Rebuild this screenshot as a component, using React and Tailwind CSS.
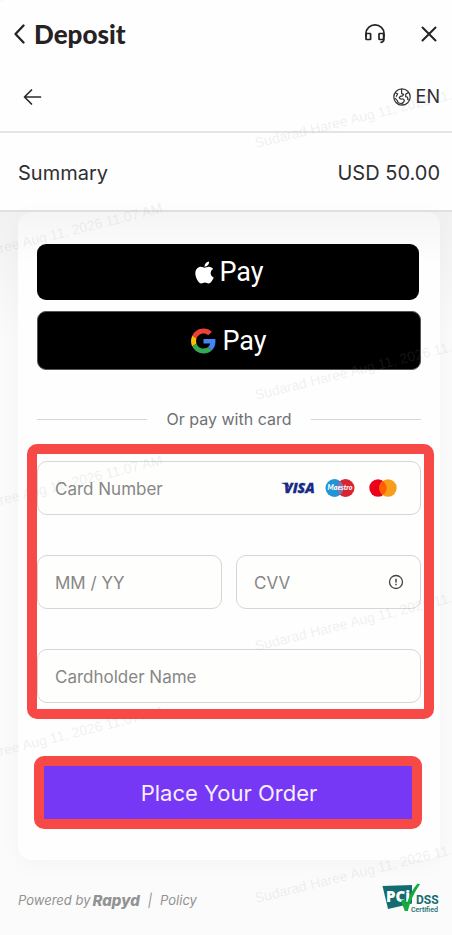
import { FaApple } from "react-icons/fa"

const watermarks = [
  { left: -71, top: 6 },
  { left: 257, top: 135 },
  { left: -71, top: 258 },
  { left: 257, top: 387 },
  { left: -71, top: 510 },
  { left: 257, top: 638 },
  { left: -71, top: 761 },
  { left: 257, top: 890 },
]

const HeadsetIcon = () => (
  <svg width="22" height="22" viewBox="0 0 22 22" fill="none" stroke="#262223" strokeWidth="1.7">
    <path d="M2 14V10.500a9 8.600 0 0 1 18 0v4" />
    <rect x="2" y="10.500" width="4.600" height="6" rx="0.6" />
    <rect x="15" y="10.500" width="4.600" height="6" rx="0.6" />
    <path d="M19.800 14.500v2.700q-.4 2-3.400 2.300" />
  </svg>
)

const GlobeIcon = () => (
  <svg width="18" height="18" viewBox="0 0 18 18" fill="none" stroke="#333" strokeWidth="1.2" strokeLinejoin="round">
    <circle cx="9" cy="9" r="8.2" />
    <path d="M8.600 1v4.600l2 .8-.8 1.400-2.600.6-1 1.400 1.400 1.200 3 .2.800 1.600-1.400 1.800-1.600 1.200-3.200-1-1-2.400-2.600-2.600M2.400 5l2.200.8-1.400 3M15.400 4.600l-2.600 1.400-.2 2.600 2 .6.200 2.400 1 .6M9.800 15.600l.4 1.400" />
  </svg>
)

const GoogleLogo = () => (
  <svg width="25" height="26" viewBox="0 0 48 48">
    <path fill="#ea4335" d="M24 9.500c3.540 0 6.710 1.220 9.210 3.600l6.850-6.850C35.900 2.380 30.470 0 24 0 14.620 0 6.510 5.380 2.560 13.220l7.980 6.190C12.430 13.720 17.740 9.500 24 9.500z" />
    <path fill="#4285f4" d="M46.980 24.550c0-1.570-.15-3.090-.38-4.550H24v9.020h12.940c-.58 2.960-2.260 5.480-4.780 7.180l7.730 6c4.510-4.180 7.090-10.360 7.090-17.650z" />
    <path fill="#fbbc05" d="M10.530 28.590c-.48-1.450-.76-2.990-.76-4.590s.27-3.140.76-4.590l-7.980-6.190C.92 16.460 0 20.120 0 24c0 3.880.92 7.540 2.560 10.780l7.970-6.190z" />
    <path fill="#34a853" d="M24 48c6.480 0 11.930-2.130 15.890-5.810l-7.730-6c-2.150 1.450-4.920 2.300-8.160 2.300-6.260 0-11.570-4.220-13.470-9.910l-7.980 6.190C6.510 42.620 14.620 48 24 48z" />
  </svg>
)

const VisaLogo = () => (
  <svg width="36" height="20" viewBox="0 0 36 20" role="img" aria-label="Visa">
    <path d="M0.500 4.700h6.500l1.400 5.400Q5.400 6.300 0.500 5.300z" fill="#1a2d8a" />
    <text x="3" y="15" fontFamily="Open Sans, sans-serif" fontSize="14" fontWeight="800" fontStyle="italic" fill="#172b85" stroke="#172b85" strokeWidth="0.300">
      VISA
    </text>
  </svg>
)

const MaestroLogo = () => (
  <svg width="30" height="20" viewBox="0 0 30 20" role="img" aria-label="Maestro">
    <circle cx="9.500" cy="10" r="9" fill="#1f96d3" />
    <circle cx="20.500" cy="10" r="9" fill="#d9242f" />
    <path d="M15 2.900a9 9 0 0 1 0 14.200a9 9 0 0 1 0-14.200z" fill="#7673b8" />
    <text x="15" y="12.300" textAnchor="middle" fontFamily="Lato, sans-serif" fontSize="7" fontWeight="900" fontStyle="italic" fill="#fff">
      Maestro
    </text>
  </svg>
)

const MastercardLogo = () => (
  <svg width="28" height="18" viewBox="0 0 28 18" role="img" aria-label="Mastercard">
    <circle cx="9" cy="9" r="8.700" fill="#eb001b" />
    <circle cx="19" cy="9" r="8.700" fill="#f79e1b" />
    <path d="M14 1.900a8.700 8.700 0 0 1 0 14.200a8.700 8.700 0 0 1 0-14.200z" fill="#ff5f00" />
  </svg>
)

const PciBadge = () => (
  <svg width="58" height="32" viewBox="0 0 58 32" role="img" aria-label="PCI DSS Certified">
    <path d="M0.500 4L30 3v18.500L6 27z" fill="#136d70" />
    <text x="4" y="20" fontFamily="Open Sans, sans-serif" fontSize="15" fontWeight="800" fill="#fff">
      PCi
    </text>
    <path d="M19 19l3.300-2.200 2.500 5Q28.500 9.500 35.500 1.500l2.500.8Q29.500 14 25.800 29h-3z" fill="#14ad3c" />
    <text x="34" y="22" fontFamily="Roboto, sans-serif" fontSize="12" fontWeight="700" fill="#136d70">
      DSS
    </text>
    <text x="29" y="30" fontFamily="Roboto, sans-serif" fontSize="7" fontWeight="500" fill="#136d70">
      Certified
    </text>
  </svg>
)

const Field = ({ id, label, children }) => (
  <div className="flex h-[54px] min-w-0 flex-1 items-center rounded-[10px] border border-[#d6d6d8] bg-[#fefefd] pl-[17px] pr-4">
    <label htmlFor={id} className="sr-only">{label}</label>
    <input
      id={id}
      type="text"
      placeholder={label}
      className="h-full w-full min-w-0 flex-1 bg-transparent pt-px text-[17px] leading-6 text-[#333] outline-none placeholder:text-[#878786]"
    />
    {children}
  </div>
)

const App = () => {
  return (
    <div className="relative min-h-screen overflow-hidden bg-[#fbfbfb] font-['Inter',sans-serif] text-[#2f2f31]">
      <header className="bg-[#fefefe]">
        <div className="flex h-[68px] items-center justify-between pl-3 pr-[14px]">
          <button className="flex items-center gap-2 text-[#262223]">
            <svg width="14" height="20" viewBox="0 0 14 20" fill="none" stroke="currentColor" strokeWidth="2.300" strokeLinecap="round" strokeLinejoin="round">
              <path d="M11.500 1.500L3.500 10l8 8.500" />
            </svg>
            <span className="font-['Lato',sans-serif] text-[26px] font-black leading-8">Deposit</span>
          </button>
          <div className="flex items-center gap-[34px]">
            <button aria-label="Support"><HeadsetIcon /></button>
            <button aria-label="Close">
              <svg width="18" height="18" viewBox="0 0 18 18" fill="none" stroke="#262223" strokeWidth="2" strokeLinecap="round">
                <path d="M2.500 2.500l13 13M15.500 2.500l-13 13" />
              </svg>
            </button>
          </div>
        </div>
        <div className="flex h-[65px] items-center justify-between border-b-2 border-[#e4e4e5] pb-1.5 pl-[23px] pr-3">
          <button aria-label="Back">
            <svg width="20" height="18" viewBox="0 0 20 18" fill="none" stroke="#2b2b2d" strokeWidth="1.700" strokeLinecap="round" strokeLinejoin="round">
              <path d="M17.500 9H1.500M8.500 2L1.500 9l7 7" />
            </svg>
          </button>
          <button className="flex items-center gap-[5px] text-lg">
            <GlobeIcon />
            EN
          </button>
        </div>
        <div className="flex h-[79px] items-center justify-between border-b-2 border-[#e1e1e1] pl-[18px] pr-3 pt-0.5 text-xl">
          <span>Summary</span>
          <span>USD 50.00</span>
        </div>
      </header>

      <main className="bg-linear-to-b from-[#f1f1f1] to-[#fbfbfb] to-20% pl-[18px] pr-3">
        <div className="rounded-[14px] bg-linear-to-b from-[#f5f5f5] to-[#fefefe] to-8% px-[19px] pb-[41px] pt-8 shadow-[0_4px_24px_rgba(0,0,0,0.03)]">
          <div className="pr-0.5">
            <button className="flex h-14 w-full items-center justify-center gap-0.5 rounded-[9px] bg-black text-white" aria-label="Apple Pay">
              <FaApple size={25} />
              <span className="font-['Roboto',sans-serif] text-[27px] leading-8">Pay</span>
            </button>
          </div>
          <button className="mt-[11px] flex h-[59px] w-full items-center justify-center gap-1.5 rounded-[9px] border border-[#555] bg-black text-white" aria-label="Google Pay">
            <GoogleLogo />
            <span className="font-['Roboto',sans-serif] text-[27px] leading-8">Pay</span>
          </button>

          <div className="mt-[37px] flex items-center gap-5 text-base text-[#6f7175]">
            <span className="h-px flex-1 bg-[#d5d6d8]" />
            <span>Or pay with card</span>
            <span className="h-px flex-1 bg-[#d5d6d8]" />
          </div>

          <form className="mt-[30px]">
            <div className="relative flex flex-col gap-10">
              <div className="flex">
                <Field id="card-number" label="Card Number">
                  <div className="flex items-center pr-[7px]">
                    <VisaLogo />
                    <span className="ml-2"><MaestroLogo /></span>
                    <span className="ml-[14px]"><MastercardLogo /></span>
                  </div>
                </Field>
              </div>
              <div className="flex gap-[14px]">
                <Field id="expiry" label="MM / YY" />
                <Field id="cvv" label="CVV">
                  <svg width="16" height="16" viewBox="0 0 16 16" fill="none" stroke="#444" strokeWidth="1.300">
                    <circle cx="8" cy="8" r="6.500" />
                    <path d="M8 4.800v3.800M8 9.800v1.400" strokeWidth="1.500" />
                  </svg>
                </Field>
              </div>
              <div className="flex">
                <Field id="cardholder" label="Cardholder Name" />
              </div>
              <div className="pointer-events-none absolute -bottom-4 -left-[10px] -right-[13px] -top-[17px] z-20 rounded-[10px] border-10 border-[#f74945]" />
            </div>

            <div className="relative mt-[63px]">
              <button type="button" className="h-[53px] w-full bg-[#7638f4] pt-0.5 text-[22px] text-[#f6eefe]">
                Place Your Order
              </button>
              <div className="pointer-events-none absolute -bottom-[10px] -left-[3px] -right-px -top-[10px] z-20 rounded-[10px] border-10 border-[#f74945]" />
            </div>
          </form>
        </div>
      </main>

      <footer className="flex items-center justify-between pb-5 pl-[18px] pr-3 pt-[22px]">
        <p className="flex items-center pt-1.5 text-[13px] italic text-[#929292]">
          Powered by
          <span className="ml-0.5 text-[15px] font-extrabold leading-5">Rapyd</span>
          <span className="mx-2">|</span>
          <a href="#policy">Policy</a>
        </p>
        <PciBadge />
      </footer>

      <div className="pointer-events-none absolute inset-0 z-10 overflow-hidden" aria-hidden="true">
        {watermarks.map((mark) => (
          <span
            key={`${mark.left}-${mark.top}`}
            className="absolute origin-bottom-left -rotate-14 whitespace-nowrap font-['Liberation_Sans',sans-serif] text-sm leading-4 text-[#8a9a9a]/15"
            style={{ left: mark.left, top: mark.top }}
          >
            Sudarad Haree Aug 11, 2026 11.07 AM
          </span>
        ))}
      </div>
    </div>
  )
}

export default App
